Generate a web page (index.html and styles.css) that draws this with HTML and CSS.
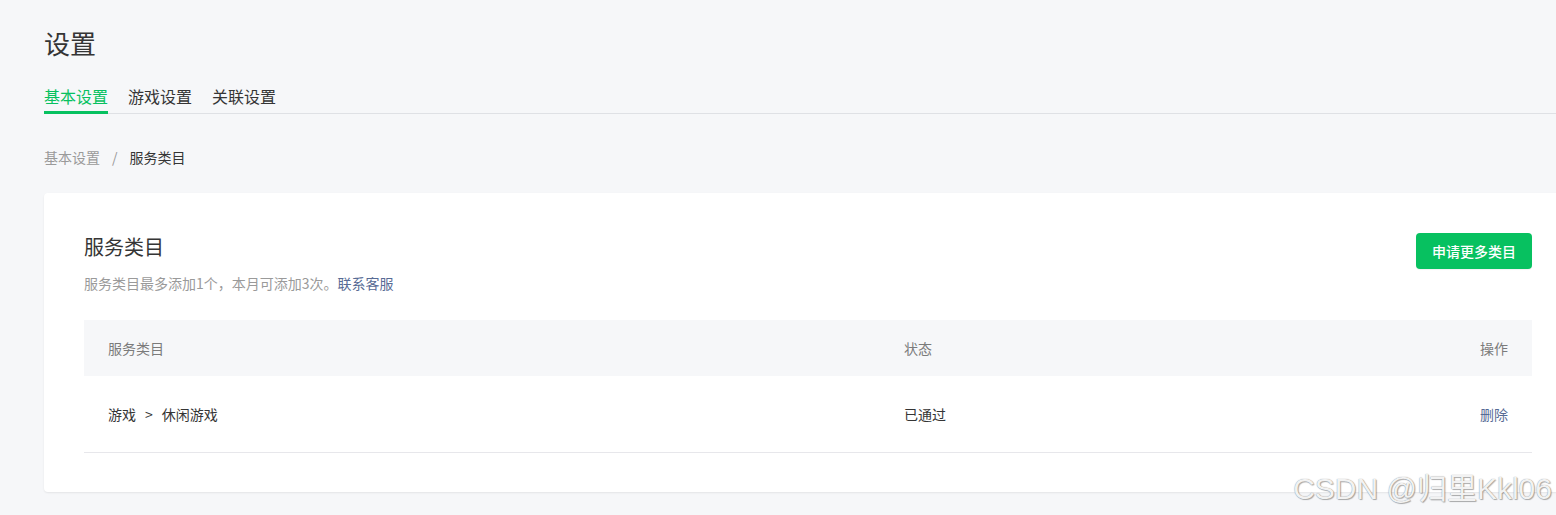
FILE: index.html
```html
<!DOCTYPE html>
<html lang="zh-CN">
<head>
<meta charset="utf-8">
<title>设置</title>
<link rel="stylesheet" href="styles.css">
</head>
<body>
<div class="page">
  <h1 class="page-title">设置</h1>
  <nav class="tabs">
    <a class="tab tab-active">基本设置</a>
    <a class="tab">游戏设置</a>
    <a class="tab">关联设置</a>
  </nav>
  <div class="breadcrumb">
    <span class="crumb-link">基本设置</span>
    <span class="crumb-sep">/</span>
    <span class="crumb-current">服务类目</span>
  </div>
  <section class="card">
    <div class="card-head">
      <div class="card-info">
        <h2 class="card-title">服务类目</h2>
        <p class="card-desc">服务类目最多添加1个，本月可添加3次。<a class="link">联系客服</a></p>
      </div>
      <button class="btn-primary">申请更多类目</button>
    </div>
    <div class="table">
      <div class="tr th">
        <div class="td col-cat">服务类目</div>
        <div class="td col-status">状态</div>
        <div class="td col-op">操作</div>
      </div>
      <div class="tr row">
        <div class="td col-cat">游戏<span class="arrow">&gt;</span>休闲游戏</div>
        <div class="td col-status">已通过</div>
        <div class="td col-op"><a class="link">删除</a></div>
      </div>
    </div>
  </section>
</div>
<div class="watermark">CSDN @归里Kkl06</div>
</body>
</html>
```

FILE: styles.css
```css
html, body {
  margin: 0;
  padding: 0;
  overflow: hidden;
}
body {
  background: #f6f7f9;
  font-family: "Noto Sans CJK SC", "Noto Sans", sans-serif;
  color: #353535;
  width: 1556px;
  height: 515px;
  position: relative;
}
.page {
  padding: 0 0 0 44px;
  width: 1528px;
}
.page-title {
  margin: 0;
  padding-top: 24px;
  font-size: 26px;
  line-height: 38px;
  font-weight: 400;
  color: #353535;
}
.tabs {
  display: flex;
  gap: 20px;
  margin-top: 22px;
  border-bottom: 1px solid #dfe1e5;
  margin-right: -20px;
}
.tab {
  font-size: 16px;
  line-height: 24px;
  padding-bottom: 3px;
  margin-bottom: -1px;
  color: #353535;
  border-bottom: 3px solid transparent;
}
.tab-active {
  color: #07c160;
  border-bottom-color: #07c160;
}
.breadcrumb {
  margin-top: 32px;
  font-size: 14px;
  line-height: 22px;
  display: flex;
}
.crumb-link { color: #9a9a9a; }
.crumb-sep { color: #9a9a9a; margin: 0 12px; }
.crumb-current { color: #353535; }
.card {
  margin-top: 25px;
  background: #fff;
  border-radius: 4px;
  box-shadow: 0 1px 2px rgba(0, 0, 0, 0.08);
  padding: 40px 40px 39px;
}
.card-head {
  display: flex;
  justify-content: space-between;
  align-items: flex-start;
}
.card-title {
  margin: 0;
  font-size: 20px;
  line-height: 28px;
  font-weight: 400;
  color: #353535;
}
.card-desc {
  margin: 11px 0 0;
  font-size: 14px;
  line-height: 22px;
  color: #9a9a9a;
}
.link { color: #576b95; cursor: pointer; }
.btn-primary {
  margin-top: 0;
  height: 36px;
  padding: 0 16px;
  border: none;
  border-radius: 4px;
  background: #07c160;
  color: #fff;
  font-family: inherit;
  font-size: 14px;
  font-weight: 500;
  box-shadow: 0 1px 1px rgba(0,0,0,0.05);
}
.table {
  margin-top: 26px;
}
.tr {
  display: flex;
  align-items: center;
  padding: 0 24px;
}
.th {
  background: #f6f7f9;
  height: 56px;
  font-size: 14px;
  color: #7b7b7b;
}
.row {
  height: 76px;
  border-bottom: 1px solid #e7e7eb;
  font-size: 14px;
  color: #353535;
}
.col-cat { width: 796px; }
.col-status { flex: 1; }
.col-op { text-align: right; }
.arrow { margin: 0 9px; }
.watermark {
  position: absolute;
  right: 4px;
  bottom: 9px;
  font-family: "Liberation Sans", "Noto Sans CJK SC", sans-serif;
  font-size: 30px;
  line-height: 34px;
  color: rgba(250, 250, 250, 0.95);
  text-shadow: 0 0 1px #7a7a7a, 1px 1px 1px rgba(0,0,0,0.3);
  letter-spacing: 0;
}
```
